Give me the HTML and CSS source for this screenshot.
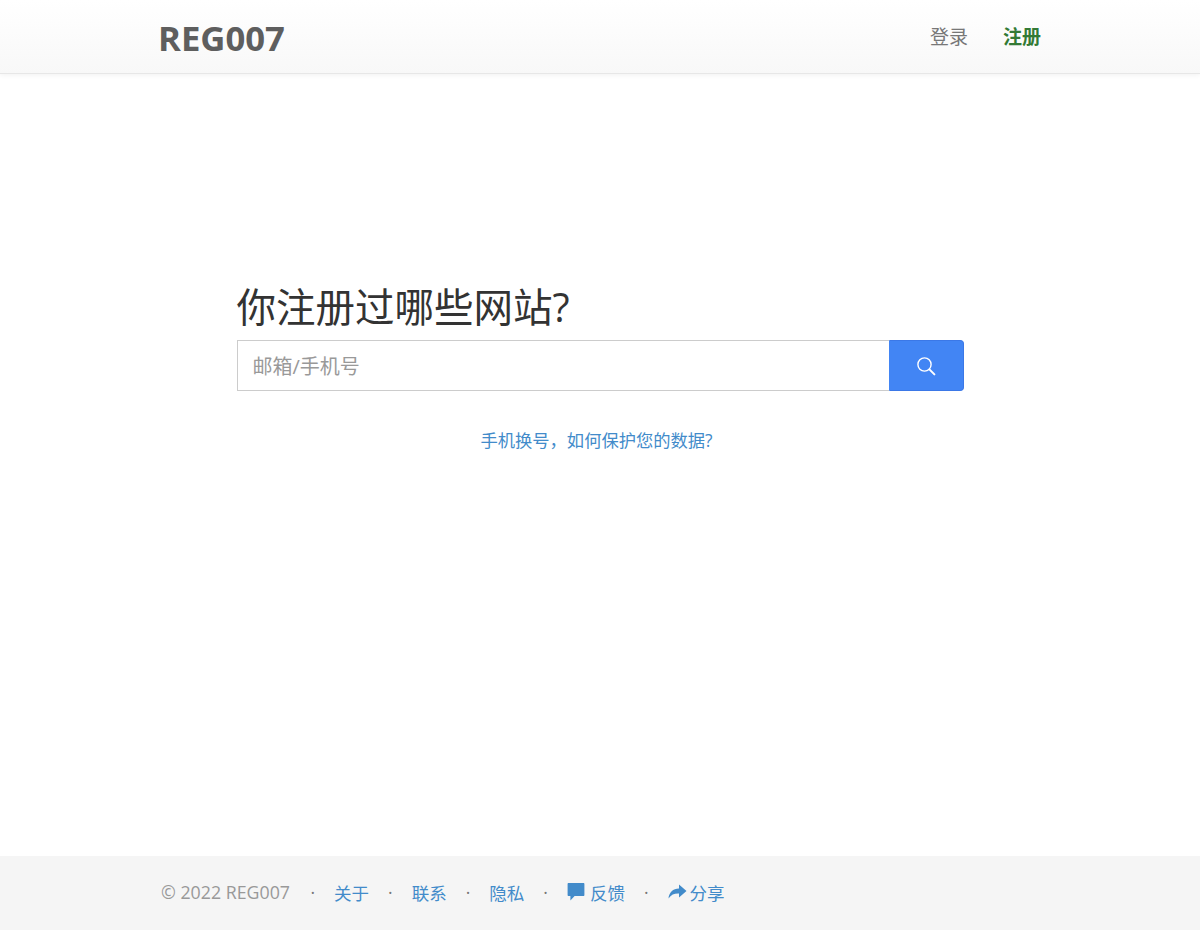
FILE: index.html
```html
<!DOCTYPE html>
<html lang="zh-CN">
<head>
  <meta charset="UTF-8">
  <meta name="viewport" content="width=device-width, initial-scale=1.0">
  <title>REG007</title>
  <link rel="stylesheet" href="styles.css">
</head>
<body>

  <nav class="navbar">
    <div class="container navbar-inner">
      <a class="brand" href="#">REG007</a>
      <div class="nav-links">
        <a class="nav-login" href="#">登录</a>
        <a class="nav-signup" href="#">注册</a>
      </div>
    </div>
  </nav>

  <main class="main">
    <div class="search-box">
      <h1 class="search-title">你注册过哪些网站?</h1>
      <form class="search-form">
        <input class="search-input" type="text" placeholder="邮箱/手机号">
        <button class="search-btn" type="button" aria-label="搜索">
          <svg width="22" height="22" viewBox="0 0 22 22" fill="none" stroke="#fff">
            <circle cx="9.5" cy="9.5" r="6.6" stroke-width="1.4"/>
            <path d="M14.4 14.4l5 5" stroke-width="2" stroke-linecap="round"/>
          </svg>
        </button>
      </form>
      <p class="search-help"><a href="#">手机换号，如何保护您的数据?</a></p>
    </div>
  </main>

  <footer class="footer">
    <div class="container footer-inner">
      <span class="copyright">© 2022 REG007</span>
      <span class="dot">·</span>
      <a href="#">关于</a>
      <span class="dot">·</span>
      <a href="#">联系</a>
      <span class="dot">·</span>
      <a href="#">隐私</a>
      <span class="dot">·</span>
      <a class="icon-link" href="#">
        <svg width="20" height="18" viewBox="0 0 20 18" fill="#428bca">
          <path d="M1.600 0h14.800c.6 0 1 .4 1 1v11c0 .6-.4 1-1 1H7.600L3.400 17.500V13H1.600c-.6 0-1-.4-1-1V1c0-.6.4-1 1-1z"/>
        </svg>
        反馈
      </a>
      <span class="dot">·</span>
      <a class="icon-link" href="#">
        <svg width="19" height="18" viewBox="0 0 19 18" fill="#428bca">
          <path d="M11 1.500l7.500 6.500L11 14.500v-4C6.500 10.300 3.200 11.500.5 15.500c.5-6 4.500-10 10.500-10z"/>
        </svg>
        分享
      </a>
    </div>
  </footer>

</body>
</html>
```

FILE: styles.css
```css
* {
  box-sizing: border-box;
}

body {
  margin: 0;
  height: 100vh;
  display: flex;
  flex-direction: column;
  background: #fff;
  color: #333;
  font-family: "Open Sans", "Noto Sans CJK SC", sans-serif;
  font-size: 17.5px;
}

a {
  color: #428bca;
  text-decoration: none;
}

.container {
  width: 900px;
  margin: 0 auto;
}

.navbar {
  height: 74px;
  background: linear-gradient(to bottom, #fff, #f8f8f8);
  border-bottom: 1px solid #e7e7e7;
  box-shadow: 0 1px 5px rgba(0, 0, 0, 0.06);
}

.navbar-inner {
  height: 100%;
  display: flex;
  justify-content: space-between;
  align-items: center;
  padding: 0 9px 0 8px;
}

.brand {
  color: #5e5e5e;
  font-size: 34.700px;
  font-weight: 700;
  line-height: 1;
  padding-top: 4px;
}

.nav-links {
  display: flex;
  gap: 35px;
  padding-bottom: 2px;
  font-size: 19px;
}

.nav-login {
  color: #777;
}

.nav-signup {
  color: #337a35;
  font-weight: 700;
}

.main {
  flex: 1;
  padding-top: 206px;
}

.search-box {
  width: 727px;
  margin: 0 auto;
}

.search-title {
  margin: 0 0 6px;
  font-size: 39.5px;
  font-weight: 400;
  line-height: 54px;
}

.search-form {
  display: flex;
  height: 51px;
}

.search-input {
  flex: 1;
  padding: 1px 15px 0;
  border: 1px solid #ccc;
  border-right: 0;
  outline: none;
  font: inherit;
  font-size: 20px;
  color: #555;
}

.search-input::placeholder {
  color: #999;
}

.search-btn {
  width: 74.500px;
  display: flex;
  justify-content: center;
  align-items: center;
  padding: 0;
  background: #4285f4;
  border: 1px solid #3b78e7;
  border-left-color: #4285f4;
  border-radius: 0 4px 4px 0;
}

.search-help {
  margin: 38px 7px 0 0;
  text-align: center;
  font-size: 17.3px;
  line-height: 24px;
}

.footer {
  height: 74px;
  background: #f5f5f5;
}

.footer-inner {
  height: 100%;
  display: flex;
  align-items: center;
  padding-bottom: 2px;
  padding-left: 11px;
  gap: 19px;
}

.copyright {
  color: #999;
  font-size: 17.8px;
  margin-right: 1.5px;
}

.dot {
  color: #777;
}

.icon-link {
  display: flex;
  align-items: center;
  gap: 3px;
}
```
